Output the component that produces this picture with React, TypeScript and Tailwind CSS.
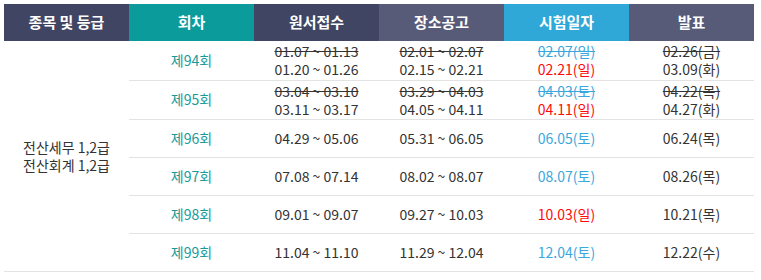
type Cell = { old?: string; now: string };

type Row = {
  round: string;
  apply: Cell;
  notice: Cell;
  exam: Cell & { oldTone?: "blue"; nowTone: "blue" | "red" };
  result: Cell;
};

const rows: Row[] = [
  {
    round: "제94회",
    apply: { old: "01.07 ~ 01.13", now: "01.20 ~ 01.26" },
    notice: { old: "02.01 ~ 02.07", now: "02.15 ~ 02.21" },
    exam: { old: "02.07(일)", now: "02.21(일)", nowTone: "red" },
    result: { old: "02.26(금)", now: "03.09(화)" },
  },
  {
    round: "제95회",
    apply: { old: "03.04 ~ 03.10", now: "03.11 ~ 03.17" },
    notice: { old: "03.29 ~ 04.03", now: "04.05 ~ 04.11" },
    exam: { old: "04.03(토)", now: "04.11(일)", nowTone: "red" },
    result: { old: "04.22(목)", now: "04.27(화)" },
  },
  {
    round: "제96회",
    apply: { now: "04.29 ~ 05.06" },
    notice: { now: "05.31 ~ 06.05" },
    exam: { now: "06.05(토)", nowTone: "blue" },
    result: { now: "06.24(목)" },
  },
  {
    round: "제97회",
    apply: { now: "07.08 ~ 07.14" },
    notice: { now: "08.02 ~ 08.07" },
    exam: { now: "08.07(토)", nowTone: "blue" },
    result: { now: "08.26(목)" },
  },
  {
    round: "제98회",
    apply: { now: "09.01 ~ 09.07" },
    notice: { now: "09.27 ~ 10.03" },
    exam: { now: "10.03(일)", nowTone: "red" },
    result: { now: "10.21(목)" },
  },
  {
    round: "제99회",
    apply: { now: "11.04 ~ 11.10" },
    notice: { now: "11.29 ~ 12.04" },
    exam: { now: "12.04(토)", nowTone: "blue" },
    result: { now: "12.22(수)" },
  },
];

function Dates({ cell, tone }: { cell: Cell; tone?: string }) {
  return (
    <div className="flex flex-col items-center leading-[18px]">
      {cell.old && <span className="line-through">{cell.old}</span>}
      <span className={tone}>{cell.now}</span>
    </div>
  );
}

export default function App() {
  return (
    <div
      className="bg-white p-1"
      style={{ fontFamily: '"Noto Sans CJK KR", "Noto Sans", sans-serif' }}
    >
      <table className="w-[750px] table-fixed border-collapse text-center text-[14px] text-[#333333]">
        <thead>
          <tr className="h-[37px] text-[15px] font-bold text-white">
            <th className="w-[125px] bg-[#3f4562]">종목 및 등급</th>
            <th className="w-[125px] bg-[#0b9b9b]">회차</th>
            <th className="w-[125px] bg-[#3f4562]">원서접수</th>
            <th className="w-[125px] bg-[#575b78]">장소공고</th>
            <th className="w-[125px] bg-[#2fa8d8]">시험일자</th>
            <th className="w-[125px] bg-[#575b78]">발표</th>
          </tr>
        </thead>
        <tbody>
          {rows.map((row, i) => (
            <tr
              key={row.round}
              className={`border-b border-[#e3e3e3] ${i < 2 ? "h-[39px]" : "h-[38px]"}`}
            >
              {i === 0 && (
                <td
                  rowSpan={rows.length}
                  className="border-b border-[#e3e3e3] leading-[18px]"
                >
                  전산세무 1,2급
                  <br />
                  전산회계 1,2급
                </td>
              )}
              <td className="text-[#1a9a9a]">{row.round}</td>
              <td>
                <Dates cell={row.apply} />
              </td>
              <td>
                <Dates cell={row.notice} />
              </td>
              <td>
                <div className="flex flex-col items-center leading-[18px]">
                  {row.exam.old && (
                    <span className="text-[#3ba7dc] line-through">{row.exam.old}</span>
                  )}
                  <span
                    className={
                      row.exam.nowTone === "red" ? "text-[#ff0a0a]" : "text-[#3ba7dc]"
                    }
                  >
                    {row.exam.now}
                  </span>
                </div>
              </td>
              <td>
                <Dates cell={row.result} />
              </td>
            </tr>
          ))}
        </tbody>
      </table>
    </div>
  );
}
